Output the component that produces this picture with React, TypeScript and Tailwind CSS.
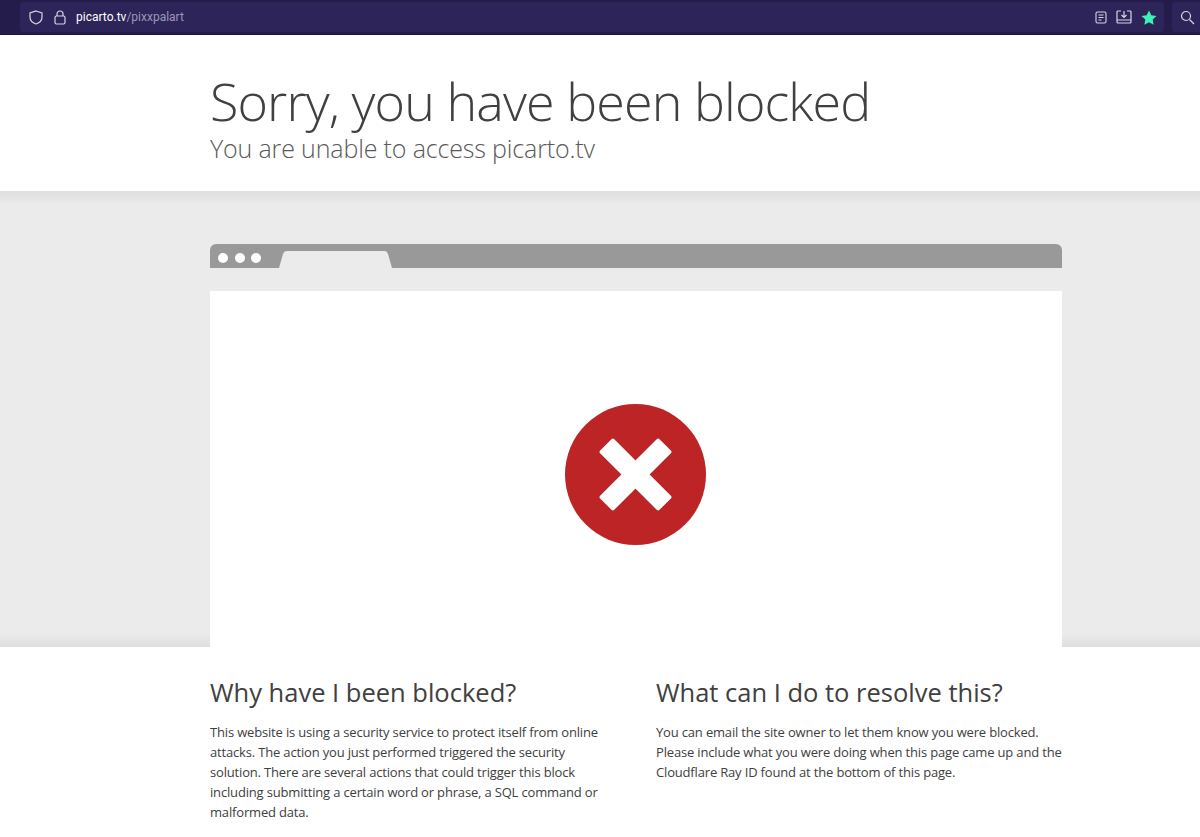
import React from "react";

function CloseX() {
  return (
    <svg className="mt-[10px] mr-[2px]" width="141" height="141" viewBox="0 0 141 141">
      <circle cx="70.5" cy="70.5" r="70.5" fill="#bd2426" />
      <g transform="rotate(45 70.5 70.5)" fill="#fff">
        <rect x="28.5" y="60.5" width="84" height="20" rx="2" />
        <rect x="60.5" y="28.5" width="20" height="84" rx="2" />
      </g>
    </svg>
  );
}

export default function App() {
  return (
    <div className="w-[1200px] h-[837px] overflow-hidden bg-white font-['Open_Sans',sans-serif] text-[#404040]">
      <div className="h-[35px] bg-[#241c4b] border-b border-[#1c153d] flex items-stretch pl-[20px] pt-[2px] pb-[2px]">
        <div className="w-[1144px] bg-[#2d2459] rounded-[3px] flex items-center justify-between pl-[9px] pr-[7px]">
          <div className="flex items-center">
            <svg width="14" height="15" viewBox="0 0 14 15" fill="none" stroke="#d8d6e4" strokeWidth="1.2"><path d="M7 1 L13 3 V7 C13 11 10 13 7 14 C4 13 1 11 1 7 V3 Z" /></svg>
            <svg className="ml-[11px]" width="12" height="15" viewBox="0 0 12 15" fill="none" stroke="#d8d6e4" strokeWidth="1.2"><rect x="1" y="6" width="10" height="8" rx="1.5" /><path d="M3 6 V4 a3 3 0 0 1 6 0 V6" /></svg>
            <div className="ml-[10px] text-[12px] text-white font-['Roboto',sans-serif]">picarto.tv<span className="text-[#9c97b8]">/pixxpalart</span></div>
          </div>
          <div className="flex items-center">
            <svg width="12" height="13" viewBox="0 0 12 13" fill="none" stroke="#d8d6e4" strokeWidth="1.1"><rect x="1" y="1" width="10" height="11" rx="1.5" /><path d="M3.5 4h5M3.5 6.5h5M3.5 9h3" /></svg>
            <svg className="ml-[9px]" width="16" height="14" viewBox="0 0 16 14" fill="none" stroke="#d8d6e4" strokeWidth="1.2"><path d="M5 1H2a1 1 0 0 0-1 1v10a1 1 0 0 0 1 1h12a1 1 0 0 0 1-1V2a1 1 0 0 0-1-1h-3M8 1v6M5.5 5l2.5 2.5L10.5 5M1 10h14" /></svg>
            <svg className="ml-[9px]" width="16" height="15" viewBox="0 0 16 15" fill="#3cf2b6"><path d="M8 0.5l2.3 4.8 5.2.7-3.8 3.6.9 5.2L8 12.3l-4.6 2.5.9-5.2L.5 6l5.2-.7z" /></svg>
          </div>
        </div>
        <div className="ml-[8px] flex-1 bg-[#2d2459] rounded-l-[3px] flex items-center pl-[8px]">
          <svg width="15" height="15" viewBox="0 0 15 15" fill="none" stroke="#d8d6e4" strokeWidth="1.2"><circle cx="6" cy="6" r="4.5" /><path d="M9.5 9.5L14 14" /></svg>
        </div>
      </div>
      <header className="h-[156px] pl-[210px] pt-[36px] bg-white">
        <h1 className="text-[52px] leading-[60px] tracking-[-0.9px] font-light text-[#404040]">Sorry, you have been blocked</h1>
        <h2 className="mt-[5px] text-[25px] leading-[24px] tracking-[-0.15px] font-light text-[#595959]">You are unable to access picarto.tv</h2>
      </header>
      <div className="h-[456px] bg-[linear-gradient(to_bottom,#dedede,#ebebeb_3%,#ebebeb_97%,#dedede)] pt-[53px] pl-[210px] flex flex-col">
        <div className="w-[852px] h-[24px] bg-[#999999] rounded-t-[6px] flex items-end">
          <div className="flex items-center gap-[6.5px] pl-[8px] pt-[3px] h-full">
            <span className="w-[10px] h-[10px] rounded-full bg-white" />
            <span className="w-[10px] h-[10px] rounded-full bg-white" />
            <span className="w-[10px] h-[10px] rounded-full bg-white" />
          </div>
          <svg className="ml-[18px]" width="114" height="17" viewBox="0 0 114 17" fill="#ebebeb"><path d="M0 17 L4 3 Q5 0 8 0 H106 Q108 0 109 3 L113 17 Z" /></svg>
        </div>
        <div className="w-[852px] mt-[23px] flex-1 bg-white flex items-center justify-center">
          <CloseX />
        </div>
      </div>
      <div className="grid grid-cols-[414px_407px] gap-[32px] ml-[210px] pt-[29px]">
        <section>
          <h2 className="text-[25.5px] leading-[32px] font-normal text-[#404040]">Why have I been blocked?</h2>
          <p className="mt-[14px] max-w-[396px] text-[13px] leading-[20px] tracking-[-0.17px]">This website is using a security service to protect itself from online attacks. The action you just performed triggered the security solution. There are several actions that could trigger this block including submitting a certain word or phrase, a SQL command or malformed data.</p>
        </section>
        <section>
          <h2 className="text-[25.5px] leading-[32px] font-normal text-[#404040]">What can I do to resolve this?</h2>
          <p className="mt-[14px] text-[13px] leading-[20px] tracking-[-0.17px]">You can email the site owner to let them know you were blocked. Please include what you were doing when this page came up and the Cloudflare Ray ID found at the bottom of this page.</p>
        </section>
      </div>
    </div>
  );
}
